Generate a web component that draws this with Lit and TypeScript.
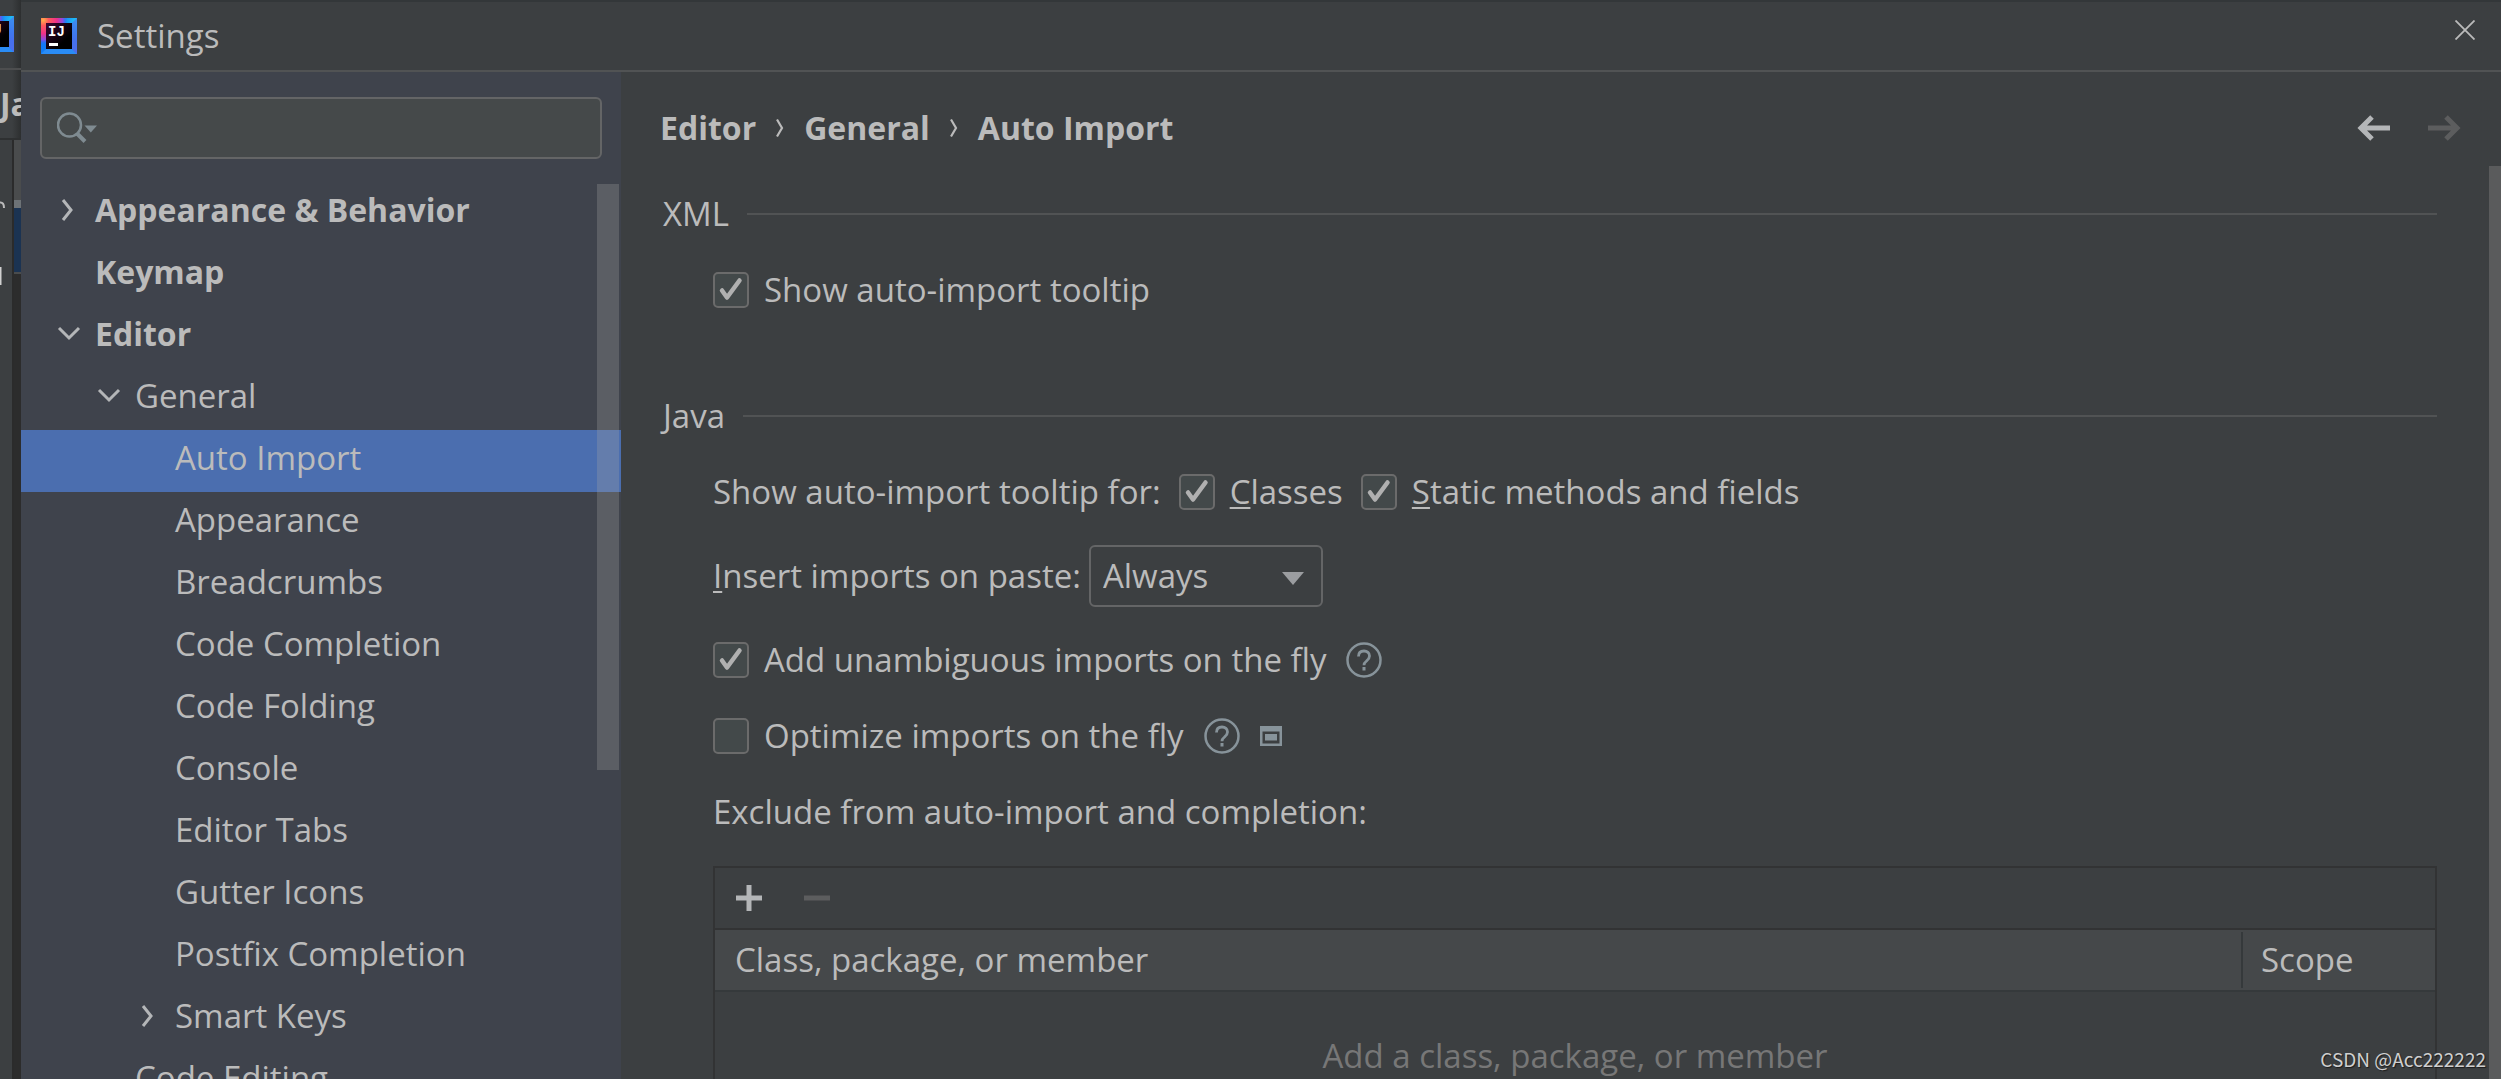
import { LitElement, html, css, svg, nothing } from "lit";
import { customElement, property, state } from "lit/decorators.js";

type Expansion = "open" | "closed" | "leaf";

interface TreeNode {
  label: string;
  level: number;
  expansion: Expansion;
  strong?: boolean;
}

const TREE: TreeNode[] = [
  { label: "Appearance & Behavior", level: 0, expansion: "closed", strong: true },
  { label: "Keymap", level: 0, expansion: "leaf", strong: true },
  { label: "Editor", level: 0, expansion: "open", strong: true },
  { label: "General", level: 1, expansion: "open" },
  { label: "Auto Import", level: 2, expansion: "leaf" },
  { label: "Appearance", level: 2, expansion: "leaf" },
  { label: "Breadcrumbs", level: 2, expansion: "leaf" },
  { label: "Code Completion", level: 2, expansion: "leaf" },
  { label: "Code Folding", level: 2, expansion: "leaf" },
  { label: "Console", level: 2, expansion: "leaf" },
  { label: "Editor Tabs", level: 2, expansion: "leaf" },
  { label: "Gutter Icons", level: 2, expansion: "leaf" },
  { label: "Postfix Completion", level: 2, expansion: "leaf" },
  { label: "Smart Keys", level: 2, expansion: "closed" },
  { label: "Code Editing", level: 1, expansion: "leaf" },
];

const CRUMBS = ["Editor", "General", "Auto Import"];

/** Square IDE badge used in both title bars. */
@customElement("ide-logo")
export class IdeLogo extends LitElement {
  static styles = css`
    :host { display: block; flex: none; }
    .badge { display: block; width: 36px; height: 36px; }
    .letters { font: bold 14px "Liberation Mono", monospace; fill: #fff; }
  `;

  render() {
    return html`<svg class="badge" viewBox="0 0 36 36" aria-hidden="true">
      <defs>
        <linearGradient id="base" x1="0" y1="0" x2="1" y2="1">
          <stop offset="0" stop-color="#1a6dff" />
          <stop offset="0.5" stop-color="#0f7bf5" />
          <stop offset="1" stop-color="#5a5fe8" />
        </linearGradient>
        <radialGradient id="hot" cx="0.06" cy="0.06" r="0.68">
          <stop offset="0" stop-color="#ffb04a" />
          <stop offset="0.22" stop-color="#ff5a5a" />
          <stop offset="0.55" stop-color="#f0308a" />
          <stop offset="0.8" stop-color="#8a4be0" />
          <stop offset="1" stop-color="#1a6dff" stop-opacity="0" />
        </radialGradient>
        <radialGradient id="cyan" cx="1" cy="0.1" r="0.55">
          <stop offset="0" stop-color="#21d0f5" />
          <stop offset="1" stop-color="#21a0f5" stop-opacity="0" />
        </radialGradient>
        <linearGradient id="core" x1="0" y1="0" x2="1" y2="1">
          <stop offset="0" stop-color="#3a0630" />
          <stop offset="0.7" stop-color="#000" />
        </linearGradient>
      </defs>
      <rect width="36" height="36" fill="url(#base)" />
      <rect width="36" height="36" fill="url(#cyan)" />
      <rect width="36" height="36" fill="url(#hot)" />
      <path d="M0 36 5 31H31L36 36Z" fill="#2a8cf5" />
      <path d="M36 0 31 5V31L36 36Z" fill="#4a74ec" opacity="0.7" />
      <rect x="5" y="5" width="26" height="26" fill="url(#core)" />
      <text class="letters" x="7" y="18">IJ</text>
      <rect x="8" y="25" width="9" height="3" fill="#fff" />
    </svg>`;
  }
}

/** Tick box with its label; the first letter can be marked as the mnemonic. */
@customElement("tick-box")
export class TickBox extends LitElement {
  @property() label = "";
  @property({ type: Boolean }) mnemonic = false;
  @property({ type: Boolean }) checked = false;

  static styles = css`
    :host { display: block; flex: none; }
    .row { display: flex; align-items: center; gap: 15px; }
    .box { display: grid; width: 36px; height: 36px; }
    .input, .mark { grid-area: 1 / 1; width: 36px; height: 36px; }
    .input {
      appearance: none;
      box-sizing: border-box;
      margin: 0;
      border: 2px solid #6b6b6b;
      border-radius: 5px;
      background: #43494a;
    }
    .mark { pointer-events: none; }
    .text { white-space: nowrap; }
    .key { text-decoration: underline; text-decoration-thickness: 2px; text-underline-offset: 3px; }
  `;

  private toggle(e: Event) {
    this.checked = (e.target as HTMLInputElement).checked;
  }

  render() {
    return html`<label class="row">
      <span class="box">
        <input class="input" type="checkbox" .checked=${this.checked} @change=${this.toggle} />
        ${this.checked
          ? html`<svg class="mark" viewBox="0 0 36 36" aria-hidden="true">
              <path d="M9 18.5 14 25.500 26.500 8.500" fill="none" stroke="#b0b0b0" stroke-width="4.500"
                stroke-linecap="round" stroke-linejoin="round" />
            </svg>`
          : nothing}
      </span>
      <span class="text">${this.mnemonic
        ? html`<span class="key">${this.label[0]}</span>${this.label.slice(1)}`
        : this.label}</span>
    </label>`;
  }
}

@customElement("app-root")
export class AppRoot extends LitElement {
  @state() private selected = "Auto Import";

  static styles = css`
    :host {
      display: block;
      color: #bbbbbb;
      font-family: "Open Sans", "Noto Sans", sans-serif;
      font-size: 33px;
      line-height: 44px;
    }
    * { box-sizing: border-box; }
    button, input, select { font: inherit; color: inherit; }
    button { border: 0; margin: 0; padding: 0; background: none; text-align: left; }
    svg { display: block; flex: none; }

    .screen {
      position: relative;
      display: flex;
      height: 100vh;
      overflow: hidden;
      background: #3c3f41;
    }

    /* sliver of the main window left of the dialog */
    .behind {
      flex: none;
      display: flex;
      flex-direction: column;
      width: 21px;
      overflow: hidden;
      background: linear-gradient(to right, transparent 12px, #2d2f30) #3c3f41;
    }
    .behind-title {
      display: flex;
      justify-content: flex-end;
      height: 70px;
      padding: 16px 7px 0 0;
      border-bottom: 2px solid #4d4e4f;
    }
    .behind-name {
      display: flex;
      align-items: center;
      height: 70px;
      border-bottom: 2px solid #2e3031;
      font-size: 32px;
      font-weight: 700;
    }
    .behind-body { flex: 1; display: flex; }
    .behind-side { width: 12px; padding-top: 60px; }
    .behind-edge { flex: 1; display: flex; flex-direction: column; border-left: 2px solid #2b2b2b; background: #2c2c2c; }
    .edge-tab { height: 60px; background: #4a4c4d; }
    .edge-cap { height: 8px; background: #6d7276; }
    .edge-pick { height: 64px; background: #1b3352; }
    .edge-line { height: 2px; background: #4a4c4d; }

    .dialog {
      flex: 1;
      min-width: 0;
      display: flex;
      flex-direction: column;
      border-top: 2px solid #333739;
    }
    .titlebar {
      flex: none;
      display: flex;
      align-items: center;
      gap: 20px;
      height: 70px;
      padding: 0 26px 0 20px;
      border-bottom: 2px solid #515354;
    }
    .title { flex: 1; margin: 0; font-size: inherit; font-weight: 400; }
    .close { align-self: flex-start; padding-top: 18px; }
    .panes { flex: 1; min-height: 0; display: flex; }

    .sidebar {
      flex: none;
      display: flex;
      flex-direction: column;
      width: 600px;
      background: #3f434c;
    }
    .search {
      flex: none;
      display: flex;
      align-items: center;
      height: 62px;
      margin: 25px 19px 23px;
      padding-left: 15px;
      border: 2px solid #646566;
      border-radius: 6px;
      background: #45494a;
    }
    .query { flex: 1; min-width: 0; height: 56px; border: 0; outline: 0; background: none; }
    .tree-area { position: relative; flex: 1; min-height: 0; overflow: hidden; }
    .tree { margin: 0; padding: 0; list-style: none; }
    .node {
      display: flex;
      align-items: center;
      gap: 11px;
      width: 100%;
      height: 62px;
      padding-bottom: 6px;
      white-space: nowrap;
    }
    .node.level-0 { padding-left: 31px; }
    .node.level-1 { padding-left: 71px; }
    .node.level-2 { padding-left: 111px; }
    .node.strong { font-size: 32px; font-weight: 700; }
    .node.selected { background: #4b6eaf; }
    .twist { width: 32px; height: 32px; }
    .tree-thumb {
      position: absolute;
      top: 2px;
      right: 2px;
      width: 22px;
      height: 586px;
      background: rgba(166, 166, 166, 0.28);
    }

    .main { position: relative; flex: 1; min-width: 0; overflow: hidden; padding: 24px 64px 0 39px; }
    .topline { display: flex; align-items: center; justify-content: space-between; height: 64px; }
    .crumbs { display: flex; align-items: center; gap: 20px; font-size: 32px; font-weight: 700; }
    .crumb { color: inherit; text-decoration: none; }
    .history { display: flex; gap: 36px; margin-right: -24px; }

    .legend {
      display: flex;
      align-items: center;
      gap: 18px;
      height: 48px;
      margin: 30px 0 28px;
      padding-left: 3px;
      font-size: inherit;
      font-weight: 400;
    }
    .legend.later { margin-top: 78px; }
    .legend::after { content: ""; flex: 1; height: 2px; background: #515354; }
    .caption { white-space: nowrap; }
    .options { display: flex; flex-direction: column; gap: 28px; padding-left: 53px; }
    .option { display: flex; align-items: center; height: 48px; gap: 18px; }
    .option.tall { height: 64px; gap: 8px; }
    .option.aided { gap: 20px; }
    .key { text-decoration: underline; text-decoration-thickness: 2px; text-underline-offset: 3px; }
    .combo { position: relative; width: 234px; }
    .combo-select {
      appearance: none;
      display: block;
      width: 100%;
      height: 62px;
      padding: 0 44px 0 12px;
      border: 2px solid #646566;
      border-radius: 6px;
      background: #3c3f41;
    }
    .combo-arrow { position: absolute; right: 19px; top: 27px; pointer-events: none; }

    .exclusions { border: 2px solid #323334; margin-left: 53px; margin-top: 30px; }
    .tools { display: flex; align-items: center; gap: 32px; height: 60px; padding-left: 16px; }
    .grid { width: 100%; border-collapse: separate; border-spacing: 0; table-layout: fixed; }
    .head { height: 64px; padding: 0 0 0 20px; background: #45484a; border-top: 2px solid #323334; border-bottom: 2px solid #35393b; font-weight: 400; text-align: left; }
    .head-cell { display: flex; align-items: center; height: 56px; }
    .head.scope { width: 194px; padding-left: 0; }
    .head.scope .head-cell { padding-left: 18px; border-left: 2px solid #35393b; }
    .empty { height: 240px; padding: 42px 0 0; color: #777777; text-align: center; vertical-align: top; }
    .page-thumb { position: absolute; top: 94px; right: 0; bottom: 0; width: 12px; background: #5a5b5c; }

    .credit {
      position: absolute;
      right: 15px;
      bottom: 6px;
      color: #cfcfcf;
      font-family: "Noto Sans CJK SC", sans-serif;
      font-size: 19px;
      line-height: 28px;
      text-shadow: 1px 1px 1px #1c1c1c;
    }
  `;

  private twist(kind: Expansion) {
    const d = kind === "closed" ? "M11 6 19 16 11 26" : "M7 10 17 20 27 10";
    return html`<svg class="twist" viewBox="0 0 32 32" aria-hidden="true">
      ${kind === "leaf"
        ? nothing
        : svg`<path d=${d} fill="none" stroke="#b4b6b8" stroke-width="3" />`}
    </svg>`;
  }

  private helpIcon() {
    return html`<button class="help" aria-label="Help">
      <svg width="36" height="36" viewBox="0 0 36 36" aria-hidden="true">
        <circle cx="18" cy="18" r="16.500" fill="none" stroke="#87939a" stroke-width="2.500" />
        <path d="M12.500 14.500C12.500 10.800 14.800 9 18 9s5.500 2 5.500 4.900c0 2.500-1.400 3.700-3 5.100-1.600 1.300-2.500 2.200-2.500 4.200"
          fill="none" stroke="#87939a" stroke-width="2.800" />
        <rect x="16.500" y="25" width="3" height="3.500" fill="#87939a" />
      </svg>
    </button>`;
  }

  private renderNode(n: TreeNode) {
    const cls = `node level-${n.level}${n.strong ? " strong" : ""}${n.label === this.selected ? " selected" : ""}`;
    return html`<li>
      <button class=${cls} @click=${() => (this.selected = n.label)}>
        ${this.twist(n.expansion)}<span>${n.label}</span>
      </button>
    </li>`;
  }

  render() {
    return html`<div class="screen">
      <div class="behind">
        <div class="behind-title"><ide-logo></ide-logo></div>
        <div class="behind-name">Ja</div>
        <div class="behind-body">
          <div class="behind-side">
            <svg width="6" height="86" viewBox="0 0 6 86" aria-hidden="true">
              <path d="M0 2.500Q4 2 4 8" fill="none" stroke="#bbbbbb" stroke-width="2" />
              <path d="M0 67H1.500V85H0Z" fill="#d0d0d0" />
            </svg>
          </div>
          <div class="behind-edge">
            <div class="edge-tab"></div>
            <div class="edge-cap"></div>
            <div class="edge-pick"></div>
            <div class="edge-line"></div>
          </div>
        </div>
      </div>

      <div class="dialog">
        <header class="titlebar">
          <ide-logo></ide-logo>
          <h1 class="title">Settings</h1>
          <button class="close" aria-label="Close">
            <svg width="20" height="20" viewBox="0 0 20 20" aria-hidden="true">
              <path d="M0.500 0.500 19.500 19.500M19.500 0.500 0.500 19.500" stroke="#bbbbbb" stroke-width="1.800" />
            </svg>
          </button>
        </header>

        <div class="panes">
          <nav class="sidebar">
            <label class="search">
              <svg width="44" height="36" viewBox="0 0 44 36" aria-hidden="true">
                <circle cx="12.500" cy="15" r="11.500" fill="none" stroke="#7f8b91" stroke-width="2.500" />
                <path d="M20 23.500 28 31.500" stroke="#7f8b91" stroke-width="4" />
                <path d="M27.500 15.500H40L33.800 22.500Z" fill="#7f8b91" />
              </svg>
              <input class="query" type="text" aria-label="Search settings" />
            </label>
            <div class="tree-area">
              <ul class="tree">${TREE.map((n) => this.renderNode(n))}</ul>
              <div class="tree-thumb"></div>
            </div>
          </nav>

          <main class="main">
            <div class="topline">
              <div class="crumbs">
                ${CRUMBS.map(
                  (c, i) => html`${i > 0
                      ? html`<svg width="8" height="20" viewBox="0 0 8 20" aria-hidden="true">
                          <path d="M1 1.500 6 10 1 18.500" fill="none" stroke="#bbbbbb" stroke-width="2.200" />
                        </svg>`
                      : nothing}<a class="crumb" href="#">${c}</a>`
                )}
              </div>
              <div class="history">
                <button aria-label="Back">
                  <svg width="34" height="26" viewBox="0 0 34 26" aria-hidden="true">
                    <path d="M33 13H5M15 2 4 13 15 24" fill="none" stroke="#b4b6b8" stroke-width="5" />
                  </svg>
                </button>
                <button aria-label="Forward" disabled>
                  <svg width="34" height="26" viewBox="0 0 34 26" aria-hidden="true">
                    <path d="M1 13H29M19 2 30 13 19 24" fill="none" stroke="#5c5d5e" stroke-width="5" />
                  </svg>
                </button>
              </div>
            </div>

            <h2 class="legend"><span class="caption">XML</span></h2>
            <div class="options">
              <div class="option"><tick-box label="Show auto-import tooltip" checked></tick-box></div>
            </div>

            <h2 class="legend later"><span class="caption">Java</span></h2>
            <div class="options">
              <div class="option">
                <span class="caption">Show auto-import tooltip for:</span>
                <tick-box label="Classes" mnemonic checked></tick-box>
                <tick-box label="Static methods and fields" mnemonic checked></tick-box>
              </div>
              <div class="option tall">
                <label class="caption" for="paste"><span class="key">I</span>nsert imports on paste:</label>
                <div class="combo">
                  <select class="combo-select" id="paste">
                    <option>Always</option>
                    <option>Ask</option>
                    <option>Never</option>
                  </select>
                  <svg class="combo-arrow" width="22" height="13" viewBox="0 0 22 13" aria-hidden="true">
                    <path d="M0 0H22L11 13Z" fill="#9b9da0" />
                  </svg>
                </div>
              </div>
              <div class="option aided">
                <tick-box label="Add unambiguous imports on the fly" checked></tick-box>
                ${this.helpIcon()}
              </div>
              <div class="option aided">
                <tick-box label="Optimize imports on the fly"></tick-box>
                ${this.helpIcon()}
                <svg width="22" height="20" viewBox="0 0 22 20" aria-hidden="true">
                  <path d="M0 0H22V20H0ZM2.500 5.500V17.500H19.500V5.500Z" fill="#87939a" fill-rule="evenodd" />
                  <rect x="5" y="8" width="12" height="6.500" fill="#87939a" />
                </svg>
              </div>
              <div class="option"><span class="caption">Exclude from auto-import and completion:</span></div>
            </div>

            <section class="exclusions">
              <div class="tools">
                <button aria-label="Add">
                  <svg width="36" height="36" viewBox="0 0 36 36" aria-hidden="true">
                    <path d="M18 5V31M5 18H31" stroke="#b4b6b8" stroke-width="5" />
                  </svg>
                </button>
                <button aria-label="Remove" disabled>
                  <svg width="36" height="36" viewBox="0 0 36 36" aria-hidden="true">
                    <path d="M5 18H31" stroke="#5c5d5e" stroke-width="5" />
                  </svg>
                </button>
              </div>
              <table class="grid">
                <thead>
                  <tr>
                    <th class="head"><div class="head-cell">Class, package, or member</div></th>
                    <th class="head scope"><div class="head-cell">Scope</div></th>
                  </tr>
                </thead>
                <tbody>
                  <tr><td class="empty" colspan="2">Add a class, package, or member</td></tr>
                </tbody>
              </table>
            </section>
            <div class="page-thumb"></div>
          </main>
        </div>
      </div>
      <div class="credit">CSDN @Acc222222</div>
    </div>`;
  }
}
